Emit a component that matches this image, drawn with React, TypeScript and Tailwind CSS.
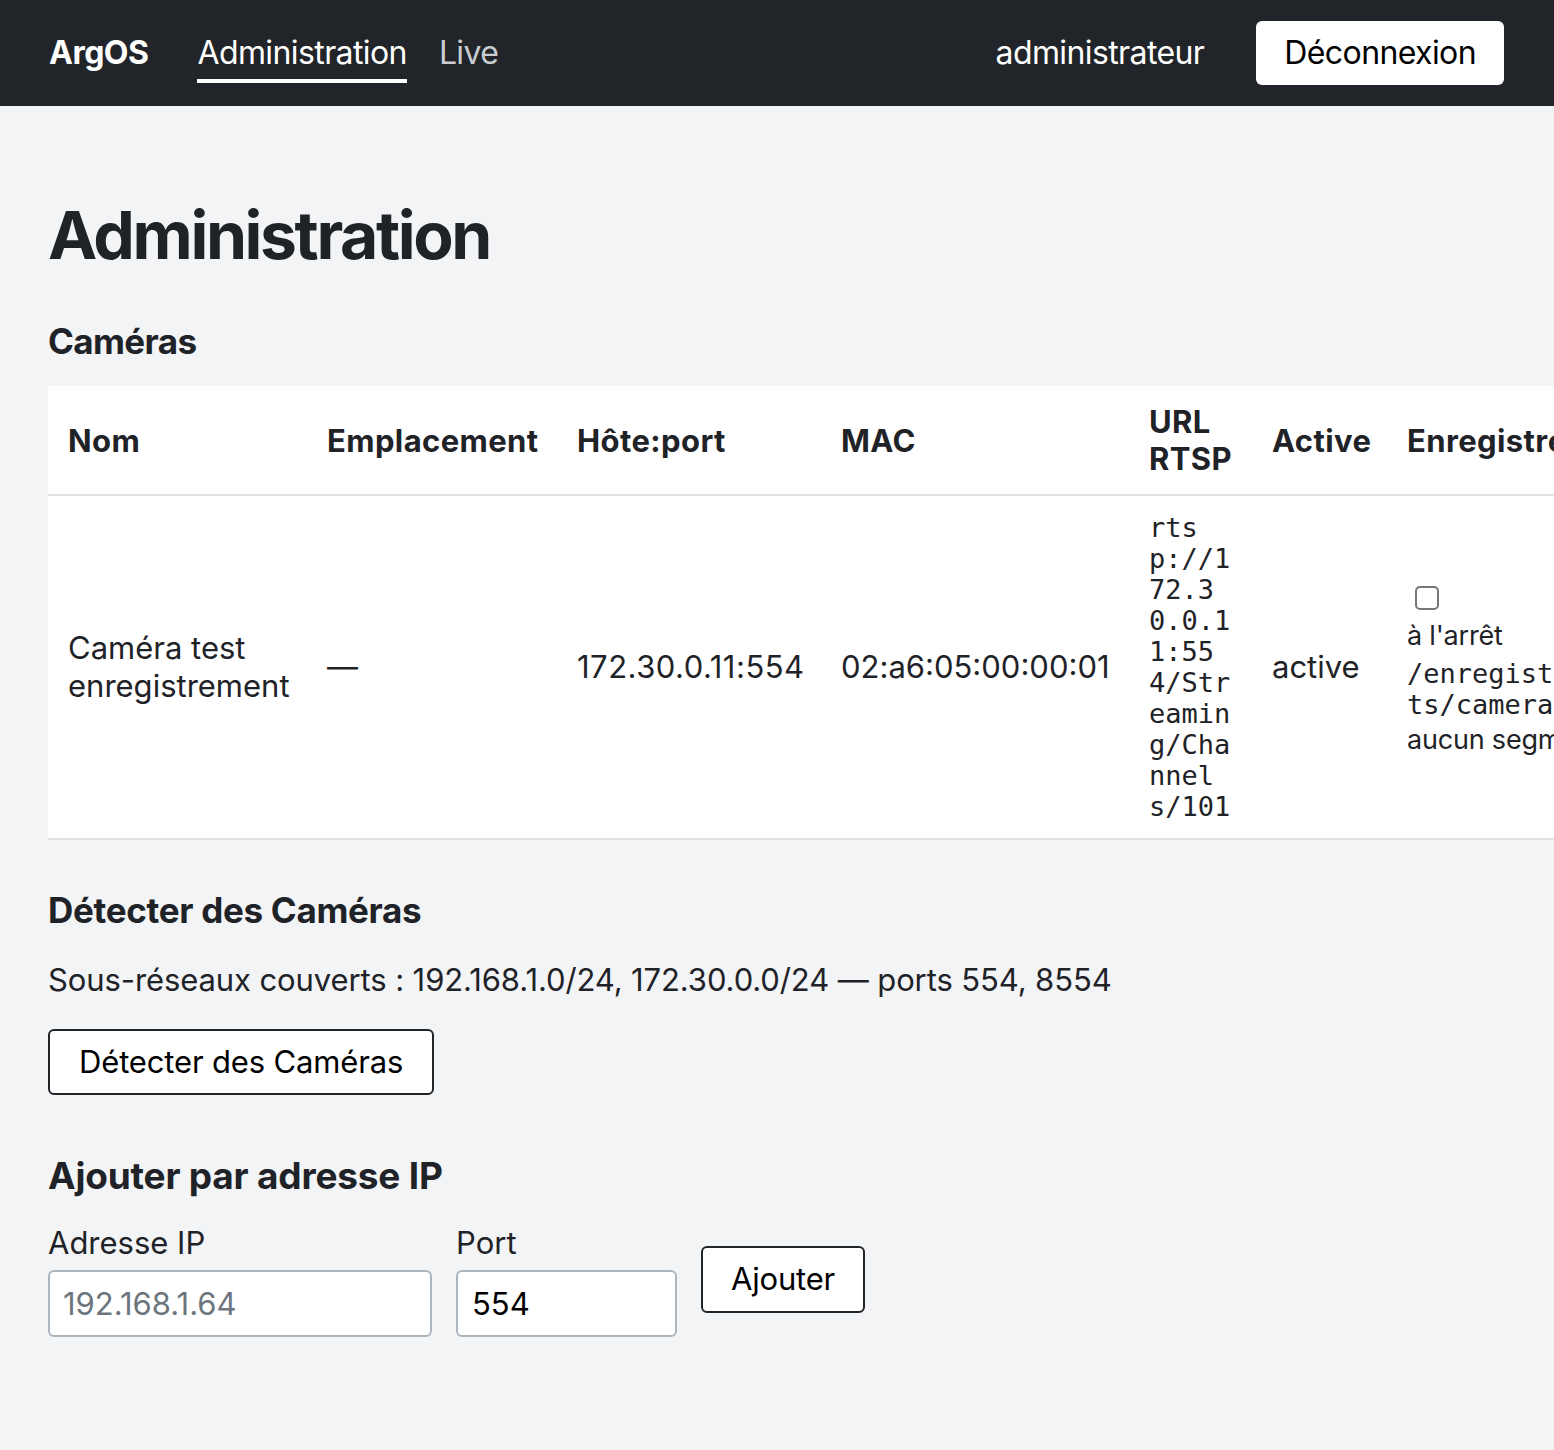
import React from "react";

export default function App() {
  const sans = { fontFamily: "Inter, 'Noto Sans', sans-serif" } as React.CSSProperties;
  const mono = { fontFamily: "'DejaVu Sans Mono', monospace" } as React.CSSProperties;
  return (
    <div className="min-h-[1450px] w-[1554px] overflow-hidden bg-[#f3f4f6] text-[#1f2328]" style={sans}>
      <nav className="flex h-[106px] items-center bg-[#212529] pl-[49px] pr-[50px]">
        <div className="text-[32px] font-bold tracking-[-0.5px] text-white">ArgOS</div>
        <div className="ml-[49px] flex items-center gap-[32px]">
          <div className="relative text-[32px] tracking-[-0.6px] text-white">
            Administration
            <div className="absolute left-0 right-0 top-[50px] h-[4px] bg-white" />
          </div>
          <div className="text-[32px] tracking-[-0.6px] text-[#c9cdd3]">Live</div>
        </div>
        <div className="ml-auto flex items-center gap-[52px]">
          <div className="text-[32px] tracking-[-0.6px] text-white">administrateur</div>
          <button className="h-[64px] rounded-[6px] bg-white px-[28px] text-[32px] tracking-[-0.6px] text-black">
            Déconnexion
          </button>
        </div>
      </nav>

      <main className="pl-[48px] pt-[96px]">
        <h1 className="text-[66px] font-bold leading-none tracking-[-2.4px]">Administration</h1>
        <h2 className="mt-[56px] text-[35px] font-bold leading-none tracking-[-0.6px]">Caméras</h2>

        <table className="mt-[27px] w-[1700px] table-fixed border-collapse bg-white text-left">
          <colgroup>
            <col className="w-[259px]" />
            <col className="w-[250px]" />
            <col className="w-[264px]" />
            <col className="w-[308px]" />
            <col className="w-[123px]" />
            <col className="w-[135px]" />
            <col />
          </colgroup>
          <thead>
            <tr className="h-[109px] border-b-2 border-[#dee2e6] text-[31px] font-bold leading-[37px] tracking-[0.4px]">
              <th className="px-[20px] font-bold">Nom</th>
              <th className="px-[20px] font-bold">Emplacement</th>
              <th className="px-[20px] font-bold">Hôte:port</th>
              <th className="px-[20px] font-bold">MAC</th>
              <th className="px-[20px] font-bold">URL RTSP</th>
              <th className="px-[20px] font-bold">Active</th>
              <th className="whitespace-nowrap px-[20px] font-bold">Enregistrement</th>
            </tr>
          </thead>
          <tbody>
            <tr className="h-[344px] border-b-2 border-[#dee2e6] align-middle text-[31px] leading-[38px] tracking-[0px]">
              <td className="px-[20px]">Caméra test enregistrement</td>
              <td className="px-[20px]">—</td>
              <td className="px-[20px] tracking-[0.5px]">172.30.0.11:554</td>
              <td className="whitespace-nowrap px-[20px] tracking-[0px]">02:a6:05:00:00:01</td>
              <td className="px-[20px] py-[14px]">
                <div className="break-all text-[27px] leading-[31px] tracking-normal" style={mono}>
                  rtsp://172.30.0.11:554/Streaming/Channels/101
                </div>
              </td>
              <td className="px-[20px]">active</td>
              <td className="px-[20px] pt-[11px]">
                <div className="w-[228px]">
                  <div className="ml-[8px] h-[24px] w-[24px] rounded-[5px] border-2 border-[#767676] bg-white" />
                  <div className="mt-[8px] text-[27px] leading-[36px] tracking-[-0.2px]">à l'arrêt</div>
                  <div className="mt-[4px] break-all text-[27px] leading-[31px] tracking-normal" style={mono}>
                    /enregistrements/camera-1
                  </div>
                  <div className="whitespace-nowrap text-[27px] leading-[40px] tracking-[-0.2px]">aucun segment</div>
                </div>
              </td>
            </tr>
          </tbody>
        </table>

        <h3 className="mt-[53px] text-[35px] font-bold leading-none tracking-[-0.3px]">Détecter des Caméras</h3>
        <p className="mt-[36px] text-[31px] leading-none tracking-[-0.1px]">
          Sous-réseaux couverts : 192.168.1.0/24, 172.30.0.0/24 — ports 554, 8554
        </p>
        <button className="mt-[34px] h-[66px] rounded-[6px] border-2 border-[#212529] bg-white px-[29px] text-[31px] tracking-[-0.15px] text-black">
          Détecter des Caméras
        </button>

        <h3 className="mt-[62px] text-[37px] font-bold leading-none tracking-[-0.2px]">Ajouter par adresse IP</h3>
        <div className="mt-[30px] flex items-start gap-[24px]">
          <div className="flex flex-col">
            <label className="text-[31px] leading-[38px] tracking-[0px]">Adresse IP</label>
            <input
              className="mt-[8px] h-[67px] w-[384px] rounded-[6px] border-2 border-[#adb5bd] bg-white px-[13px] text-[31px] tracking-[0px] placeholder:text-[#6c757d] outline-none"
              placeholder="192.168.1.64"
            />
          </div>
          <div className="flex flex-col">
            <label className="text-[31px] leading-[38px] tracking-[0px]">Port</label>
            <input
              className="mt-[8px] h-[67px] w-[221px] rounded-[6px] border-2 border-[#adb5bd] bg-white px-[14px] text-[31px] tracking-[0px] text-black outline-none"
              defaultValue="554"
            />
          </div>
          <button className="mt-[22px] h-[67px] rounded-[6px] border-2 border-[#212529] bg-white px-[28px] text-[31px] tracking-[-0.2px] text-black">
            Ajouter
          </button>
        </div>
      </main>
    </div>
  );
}
